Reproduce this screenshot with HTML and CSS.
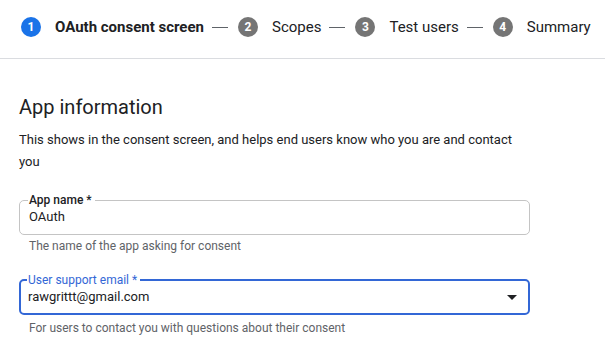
FILE: index.html
```html
<!DOCTYPE html>
<html lang="en">
<head>
<meta charset="utf-8">
<title>OAuth consent screen</title>
<link rel="stylesheet" href="styles.css">
</head>
<body>
<nav class="stepper">
  <span class="step-num active">1</span><span class="step-label current">OAuth consent screen</span><span class="dash"></span>
  <span class="step-num">2</span><span class="step-label">Scopes</span><span class="dash"></span>
  <span class="step-num">3</span><span class="step-label">Test users</span><span class="dash"></span>
  <span class="step-num">4</span><span class="step-label">Summary</span>
</nav>
<main class="content">
  <h2 class="title">App information</h2>
  <p class="desc">This shows in the consent screen, and helps end users know who you are and contact you</p>

  <div class="field">
    <fieldset class="outline">
      <legend class="label">App name *</legend>
      <div class="value">OAuth</div>
    </fieldset>
    <div class="hint">The name of the app asking for consent</div>
  </div>

  <div class="field">
    <fieldset class="outline focused">
      <legend class="label">User support email *</legend>
      <div class="value select">rawgrittt@gmail.com
        <svg class="arrow" width="10" height="5" viewBox="0 0 10 5"><path d="M0 0h10L5 5z" fill="#202124"/></svg>
      </div>
    </fieldset>
    <div class="hint">For users to contact you with questions about their consent</div>
  </div>
</main>
</body>
</html>
```
FILE: styles.css
```css
* { box-sizing: border-box; }
body {
  margin: 0;
  background: #fff;
  font-family: Roboto, "Liberation Sans", Arial, sans-serif;
  color: #202124;
}
.stepper {
  display: flex;
  align-items: center;
  height: 59px;
  padding: 0 0 4px 21px;
  border-bottom: 1px solid #dadce0;
  white-space: nowrap;
  font-size: 15px;
}
.step-num {
  width: 20px;
  height: 20px;
  border-radius: 50%;
  background: #757575;
  color: #fff;
  font-size: 12px;
  font-weight: 700;
  display: flex;
  align-items: center;
  justify-content: center;
  margin-right: 14px;
  flex: none;
}
.step-num.active { background: #1a73e8; }
.step-label { color: #202124; }
.step-label.current { font-weight: 700; }
.dash {
  width: 16px;
  height: 1px;
  background: #5f6368;
  margin: 0 10px 0 8px;
  flex: none;
}
.content {
  padding: 35px 75px 0 19px;
}
.title {
  margin: 0;
  font-size: 20px;
  font-weight: 400;
  line-height: 26px;
}
.desc {
  margin: 9px 0 0;
  font-size: 13px;
  line-height: 22px;
}
.field {
  margin-top: 20px;
}
.field + .field { margin-top: 19px; }
.outline {
  margin: 0;
  padding: 0 9px 7px;
  min-width: 0;
  border: 1px solid #c4c4c4;
  border-radius: 5px;
}
.label {
  padding: 0 3px 0 1px;
  margin-left: -1px;
  font-size: 12px;
  line-height: 14px;
  font-weight: 500;
  color: #202124;
}
.value {
  font-size: 13px;
  line-height: 20px;
  display: flex;
  align-items: center;
  justify-content: space-between;
}
.outline.focused {
  border: 2px solid #3367d6;
  padding: 0 11px 6px 7px;
}
.outline.focused .label {
  color: #3367d6;
  font-weight: 400;
}
.arrow { flex: none; }
.hint {
  margin: 3px 0 0 10px;
  font-size: 12px;
  line-height: 16px;
  color: #5f6368;
}
.focused + .hint { margin-top: 5px; }
```
